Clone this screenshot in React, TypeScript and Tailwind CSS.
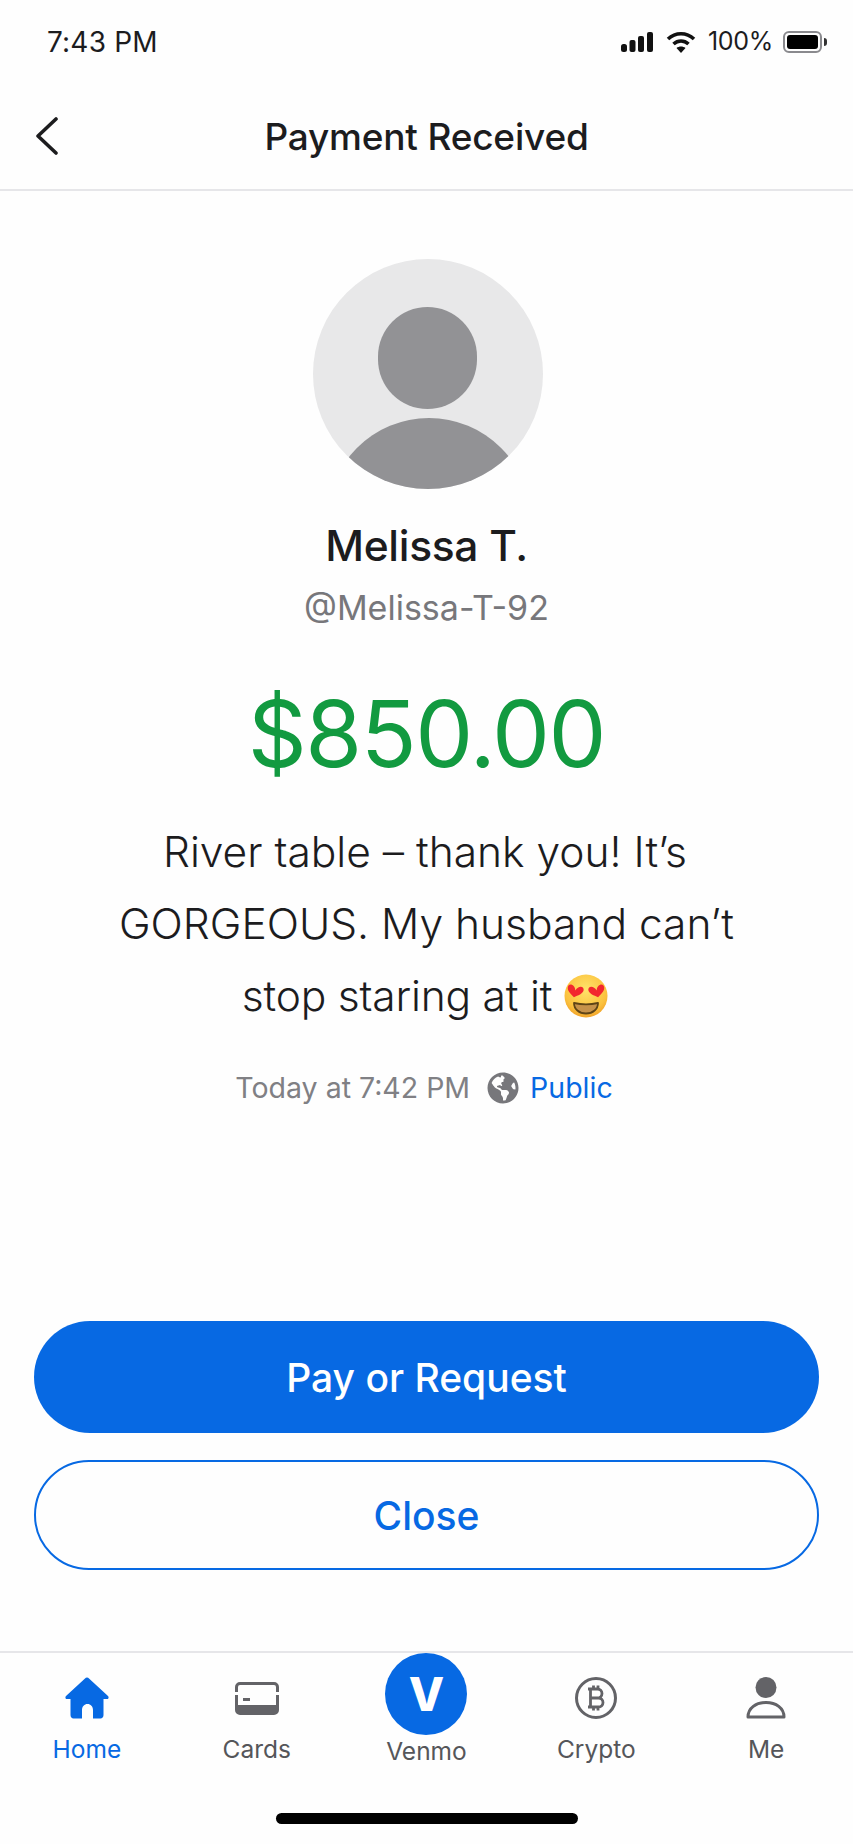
import React from "react";
import { FaGlobeAmericas } from "react-icons/fa";

const Heart = ({ x, y, rotate }: { x: number; y: number; rotate: number }) => (
  <path
    transform={`translate(${x} ${y}) rotate(${rotate}) scale(0.62)`}
    d="M0 9C-3-1-13-1-13 6c0 6 7 10 13 14 6-4 13-8 13-14 0-7-10-7-13 3z"
    fill="#F2272E"
  />
);

const HeartEyes = () => (
  <svg viewBox="0 0 44 44" className="w-[44px] h-[44px] inline-block">
    <defs>
      <radialGradient id="face" cx="50%" cy="35%" r="70%">
        <stop offset="0%" stopColor="#FFE36A" />
        <stop offset="70%" stopColor="#FBC23E" />
        <stop offset="100%" stopColor="#EE9A24" />
      </radialGradient>
    </defs>
    <circle cx="22" cy="22" r="21.5" fill="url(#face)" />
    <path d="M10 29c7 1.500 17 1.500 24 0 0 6-5 10.500-12 10.500S10 35 10 29z" fill="#C6924A" stroke="#5E4416" strokeWidth="1.800" strokeLinejoin="round" />
    <Heart x={12.500} y={11} rotate={12} />
    <Heart x={31.500} y={11} rotate={-12} />
  </svg>
);

const Tab = ({ icon, label, active }: { icon: React.ReactNode; label: string; active?: boolean }) => (
  <div className="flex flex-col items-center pt-[24px]">
    <div className="h-[42px] flex items-center justify-center">{icon}</div>
    <span className={`mt-[15px] text-[24.500px] leading-[30px] ${active ? "text-[#0769E3]" : "text-[#55565A]"}`}>{label}</span>
  </div>
);

export default function App() {
  return (
    <div className="w-[853px] h-[1844px] flex flex-col bg-[#FEFEFE] text-[#1C1C1E] font-['Inter','Liberation_Sans',sans-serif] overflow-hidden">
      {/* status bar */}
      <div className="h-[84px] flex items-center justify-between pl-[47px] pr-[26px]">
        <span className="text-[28px] tracking-[0.2px]">7:43 PM</span>
        <div className="flex items-center">
          <svg viewBox="0 0 32 20" className="w-[32px] h-[20px]" fill="#111">
            <rect x="0" y="12" width="6" height="8" rx="2.500" />
            <rect x="8.500" y="8" width="6" height="12" rx="2" />
            <rect x="17" y="4" width="6" height="16" rx="2" />
            <rect x="26" y="0" width="6" height="20" rx="2" />
          </svg>
          <svg viewBox="0 0 30 22" className="ml-[13px] w-[30px] h-[22px]" fill="none" stroke="#111" strokeWidth="3.600">
            <path d="M2 8c7.500-7 18.500-7 26 0" />
            <path d="M7.500 13c4.500-4 10.500-4 15 0" />
            <path d="M15 22l-4.500-5c2.500-2 6.500-2 9 0z" fill="#111" stroke="none" />
          </svg>
          <span className="ml-[12px] text-[25px] tracking-[-0.3px]">100%</span>
          <div className="ml-[10px] flex items-center">
            <div className="w-[39px] h-[22px] rounded-[6px] border-2 border-[#8A8A8E] p-[2px]">
              <div className="w-full h-full rounded-[3px] bg-black" />
            </div>
            <div className="w-[3px] h-[8px] rounded-r-full bg-[#333] ml-[2px]" />
          </div>
        </div>
      </div>

      {/* header */}
      <div className="relative h-[107px] flex items-center justify-center border-b-2 border-[#E6E6E9]">
        <svg viewBox="0 0 24 38" className="absolute left-[35px] top-[33px] w-[24px] h-[38px]" fill="none" stroke="#1C1C1E" strokeWidth="3.600" strokeLinecap="round" strokeLinejoin="round">
          <path d="M21 2L3 19l18 17" />
        </svg>
        <span className="text-[37px] font-[450] tracking-[-0.2px]">Payment Received</span>
      </div>

      {/* content */}
      <div className="flex flex-col items-center pt-[68px]">
        <div className="relative ml-[2px] w-[230px] h-[230px] rounded-full bg-[#E8E8E9] overflow-hidden">
          <div className="absolute left-[65px] top-[48px] w-[99px] h-[102px] rounded-full bg-[#929295]" />
          <div className="absolute left-[14px] top-[159px] w-[204px] h-[204px] rounded-full bg-[#929295]" />
        </div>
        <div className="mt-[30px] text-[42.500px] leading-[54px] font-[450] tracking-[-0.3px]">Melissa T.</div>
        <div className="mt-[13px] text-[34px] leading-[44px] text-[#77777B]">@Melissa-T-92</div>
        <div className="mt-[46px] text-[92px] leading-[116px] text-[#129A40] tracking-[-1.500px]">$850.00</div>
        <div className="mt-[24px] text-[42.500px] leading-[72px] text-center font-light">
          <div className="mr-[3px]">River table – thank you! It’s</div>
          <div>GORGEOUS. My husband can’t</div>
          <div className="flex items-center justify-center gap-[12px] mr-[3px]">
            <span className="tracking-[-0.2px]">stop staring at it</span>
            <HeartEyes />
          </div>
        </div>
        <div className="mt-[36px] mr-[5px] flex items-center text-[28.500px] leading-[40px]">
          <span className="text-[#808084]">Today at 7:42 PM</span>
          <FaGlobeAmericas className="ml-[17px] mr-[11px] w-[32px] h-[32px] text-[#77777B]" />
          <span className="text-[#0769E3]">Public</span>
        </div>
      </div>

      {/* actions */}
      <div className="mt-auto px-[34px] flex flex-col gap-[27px] pb-[81px]">
        <div className="h-[112px] pt-[2px] rounded-full bg-[#0769E3] flex items-center justify-center text-white text-[39px] font-medium">Pay or Request</div>
        <div className="h-[110px] pt-[2px] rounded-full border-2 border-[#0769E3] flex items-center justify-center text-[#0769E3] text-[39px] font-medium">Close</div>
      </div>

      {/* tab bar */}
      <div className="relative h-[193px] shrink-0 border-t-2 border-[#E6E6E9] grid grid-cols-5 px-[2px]">
        <Tab
          active
          label="Home"
          icon={
            <svg viewBox="0 0 44 42" className="w-[44px] h-[42px]" fill="#0769E3">
              <path d="M22 0.500c.8 0 1.500.4 2 .9L43 19c1.200 1.200.5 3-1 3h-3.500V38c0 2-1.300 3.500-3 3.500H28V33c0-3.500-2.400-6-5.500-6S17 29.500 17 33V41.500H8.500c-1.700 0-3-1.500-3-3.500V22H2c-1.500 0-2.200-1.800-1-3L20 1.400c.5-.5 1.200-.9 2-.9z" />
            </svg>
          }
        />
        <Tab
          label="Cards"
          icon={
            <svg viewBox="0 0 44 33" className="w-[44px] h-[33px]" fill="#636367">
              <path d="M0 10V5a5 5 0 0 1 5-5h34a5 5 0 0 1 5 5v5h-3V5a2 2 0 0 0-2-2H5a2 2 0 0 0-2 2v5z" />
              <path d="M0 13h3v10h38V13h3v15a5 5 0 0 1-5 5H5a5 5 0 0 1-5-5z" />
              <rect x="8" y="16" width="7" height="3" />
            </svg>
          }
        />
        <div className="flex flex-col items-center">
          <div className="w-[82px] h-[82px] rounded-full bg-[#0769E3] flex items-center justify-center">
            <span className="text-white text-[46px] leading-none font-extrabold">V</span>
          </div>
          <span className="mt-[1px] text-[24.500px] leading-[30px] text-[#55565A]">Venmo</span>
        </div>
        <Tab
          label="Crypto"
          icon={
            <svg viewBox="0 0 42 42" className="w-[42px] h-[42px]" fill="none" stroke="#636367">
              <circle cx="21" cy="21" r="19.500" strokeWidth="3" />
              <path d="M15 12h7.500a4.500 4.500 0 0 1 0 9H15m0 0h8.500a4.500 4.500 0 0 1 0 9H15M15.500 12v18M13 12h3M13 30h3M18.500 8.500V12M23 8.500V12M18.500 30v3.500M23 30v3.500" strokeWidth="2.800" />
            </svg>
          }
        />
        <Tab
          label="Me"
          icon={
            <svg viewBox="0 0 40 42" className="w-[40px] h-[42px]">
              <circle cx="20" cy="10.500" r="10.500" fill="#636367" />
              <path d="M2 40c0-9 8-14.500 18-14.500S38 31 38 40z" fill="none" stroke="#636367" strokeWidth="3" strokeLinejoin="round" />
            </svg>
          }
        />
        <div className="absolute left-[276px] bottom-[20px] w-[302px] h-[11px] rounded-full bg-black" />
      </div>
    </div>
  );
}
